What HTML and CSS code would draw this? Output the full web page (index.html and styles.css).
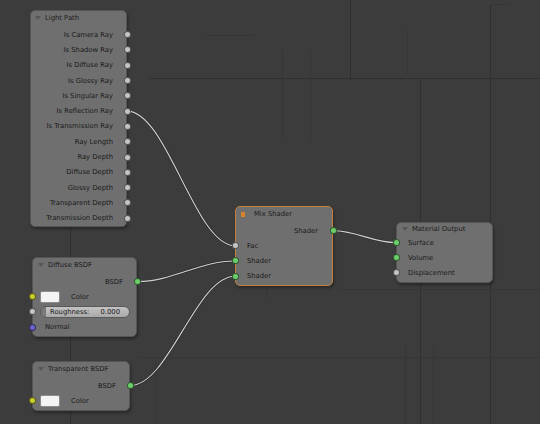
FILE: index.html
```html
<!DOCTYPE html>
<html>
<head>
<meta charset="utf-8">
<link rel="stylesheet" href="styles.css">
</head>
<body>
<div class="editor">
  <svg class="canvas" width="540" height="424" viewBox="0 0 540 424">
    <g class="grid-dark">
      <line x1="150" y1="78.5" x2="540" y2="78.5"/>
      <line x1="420.5" y1="78" x2="420.5" y2="424"/>
      <line x1="490.5" y1="4" x2="490.5" y2="424"/>
      <line x1="350.5" y1="0" x2="350.5" y2="80"/>
      <line x1="70.5" y1="226" x2="70.5" y2="424"/>
    </g>
    <g class="grid-faint">
      <line x1="205" y1="35.5" x2="255" y2="35.5"/>
      <line x1="282.5" y1="50" x2="282.5" y2="140"/>
      <line x1="310.5" y1="50" x2="310.5" y2="140"/>
      <line x1="407.5" y1="30" x2="407.5" y2="75"/>
      <line x1="490" y1="4.5" x2="510" y2="4.5"/>
      <line x1="340" y1="289.5" x2="540" y2="289.5"/>
      <line x1="140" y1="357.5" x2="540" y2="357.5"/>
      <line x1="266.5" y1="287" x2="266.5" y2="300"/>
      <line x1="405.5" y1="345" x2="405.5" y2="424"/>
      <line x1="433.5" y1="345" x2="433.5" y2="424"/>
      <line x1="155.5" y1="360" x2="155.5" y2="424"/>
    </g>
    <g class="wire-shadow">
      <path d="M127 111.15 C167 111.15 195 245.8 235 245.8"/>
      <path d="M137 281.6 C173 281.6 199 261 235 261"/>
      <path d="M130 385.6 C169 385.6 196 276.2 235 276.2"/>
      <path d="M333 230.6 C356 230.6 373 242.6 396 242.6"/>
    </g>
    <g class="wire">
      <path d="M127 111.15 C167 111.15 195 245.8 235 245.8"/>
      <path d="M137 281.6 C173 281.6 199 261 235 261"/>
      <path d="M130 385.6 C169 385.6 196 276.2 235 276.2"/>
      <path d="M333 230.6 C356 230.6 373 242.6 396 242.6"/>
    </g>
  </svg>

  <div class="node n-light">
    <div class="head"><span class="arrow"></span><span class="title">Light Path</span></div>
    <div class="body">
      <div class="row out"><span>Is Camera Ray</span><i class="sock gray"></i></div>
      <div class="row out"><span>Is Shadow Ray</span><i class="sock gray"></i></div>
      <div class="row out"><span>Is Diffuse Ray</span><i class="sock gray"></i></div>
      <div class="row out"><span>Is Glossy Ray</span><i class="sock gray"></i></div>
      <div class="row out"><span>Is Singular Ray</span><i class="sock gray"></i></div>
      <div class="row out"><span>Is Reflection Ray</span><i class="sock gray"></i></div>
      <div class="row out"><span>Is Transmission Ray</span><i class="sock gray"></i></div>
      <div class="row out"><span>Ray Length</span><i class="sock gray"></i></div>
      <div class="row out"><span>Ray Depth</span><i class="sock gray"></i></div>
      <div class="row out"><span>Diffuse Depth</span><i class="sock gray"></i></div>
      <div class="row out"><span>Glossy Depth</span><i class="sock gray"></i></div>
      <div class="row out"><span>Transparent Depth</span><i class="sock gray"></i></div>
      <div class="row out"><span>Transmission Depth</span><i class="sock gray"></i></div>
    </div>
  </div>

  <div class="node n-diffuse">
    <div class="head head-wide"><span class="arrow"></span><span class="title">Diffuse BSDF</span></div>
    <div class="body">
      <div class="row out"><span>BSDF</span><i class="sock green"></i></div>
      <div class="row in color-row"><i class="sock yellow"></i><span class="swatch"></span><span class="color-label">Color</span></div>
      <div class="row in field-row"><i class="sock gray"></i>
        <div class="field"><span>Roughness:</span><span>0.000</span></div>
      </div>
      <div class="row in"><i class="sock purple"></i><span>Normal</span></div>
    </div>
  </div>

  <div class="node n-transparent">
    <div class="head head-wide"><span class="arrow"></span><span class="title">Transparent BSDF</span></div>
    <div class="body">
      <div class="row out"><span>BSDF</span><i class="sock green"></i></div>
      <div class="row in color-row"><i class="sock yellow"></i><span class="swatch"></span><span class="color-label">Color</span></div>
    </div>
  </div>

  <div class="node n-mix selected">
    <div class="head"><span class="dot"></span><span class="title">Mix Shader</span></div>
    <div class="body">
      <div class="row out out-mix"><span>Shader</span><i class="sock green"></i></div>
      <div class="row in"><i class="sock gray"></i><span>Fac</span></div>
      <div class="row in"><i class="sock green"></i><span>Shader</span></div>
      <div class="row in"><i class="sock green"></i><span>Shader</span></div>
    </div>
  </div>

  <div class="node n-output">
    <div class="head head-wide head-short"><span class="arrow"></span><span class="title">Material Output</span></div>
    <div class="body body-tight">
      <div class="row in in-wide"><i class="sock green"></i><span>Surface</span></div>
      <div class="row in in-wide"><i class="sock green"></i><span>Volume</span></div>
      <div class="row in in-wide"><i class="sock gray"></i><span>Displacement</span></div>
    </div>
  </div>
</div>
</body>
</html>
```

FILE: styles.css
```css
html, body {
  margin: 0;
  padding: 0;
  background: #3b3b3b;
}

.editor {
  position: relative;
  width: 540px;
  height: 424px;
  overflow: hidden;
  background: #3c3c3c;
  font-family: "DejaVu Sans", "Liberation Sans", sans-serif;
  font-size: 6.8px;
  color: #1a1a1a;
}

.canvas {
  position: absolute;
  left: 0;
  top: 0;
}

.grid-dark line {
  stroke: #303030;
  stroke-width: 1;
}

.grid-faint line {
  stroke: #363636;
  stroke-width: 1;
}

.wire-shadow path {
  fill: none;
  stroke: rgba(20, 20, 20, 0.45);
  stroke-width: 2.4;
}

.wire path {
  fill: none;
  stroke: #d2d2d2;
  stroke-width: 1.1;
}

/* nodes placed on the free canvas */
.node {
  position: absolute;
  box-sizing: border-box;
  background: #6f6f6f;
  border: 1px solid #555555;
  border-radius: 5px;
  box-shadow: 1px 2px 3px rgba(0, 0, 0, 0.35);
}

.n-light { left: 30px; top: 10px; width: 97px; }
.n-diffuse { left: 32px; top: 257px; width: 105px; }
.n-transparent { left: 32px; top: 361px; width: 98px; }
.n-mix { left: 235px; top: 206px; width: 98px; }
.n-output { left: 396px; top: 222px; width: 97px; }

.node.selected {
  border-color: #c3813e;
}

.head {
  height: 14px;
  display: flex;
  align-items: center;
  padding-left: 4px;
  gap: 4px;
  white-space: nowrap;
}

.head-wide { padding-left: 5px; }
.head-short { height: 12px; }

.arrow {
  width: 0;
  height: 0;
  border-left: 3px solid transparent;
  border-right: 3px solid transparent;
  border-top: 4px solid #575757;
}

.dot {
  width: 4px;
  height: 5px;
  margin-left: 1px;
  margin-right: 5px;
  background: #d9822b;
}

.title {
  color: #1c1c1c;
}

.body {
  padding: 2px 0 1.5px;
}

.body-tight { padding-top: 0; }

.n-light .body { padding-bottom: 0; }
.n-light .row { height: 15.3px; }

.row {
  position: relative;
  height: 15.2px;
  display: flex;
  align-items: center;
  white-space: nowrap;
}

.row.out {
  justify-content: flex-end;
  padding-right: 13px;
}

.row.out-mix { padding-right: 14px; }

.row.in {
  padding-left: 11px;
}

.row.in-wide { padding-left: 11px; }

.n-diffuse .row.in,
.n-transparent .row.in { padding-left: 12px; }

.row.color-row,
.row.field-row {
  padding-left: 7px !important;
}

.sock {
  position: absolute;
  top: 50%;
  width: 7px;
  height: 7px;
  margin-top: -3.5px;
  box-sizing: border-box;
  border-radius: 50%;
  border: 0.8px solid rgba(0, 0, 0, 0.55);
}

.out .sock { right: -4.5px; }
.in .sock { left: -4.5px; }

.sock.gray { background: #c4c4c4; }
.sock.green { background: #6ccf6c; }
.sock.yellow { background: #c9cd2e; }
.sock.purple { background: #6a62cc; }

.swatch {
  width: 20px;
  height: 12px;
  box-sizing: border-box;
  background: #f4f4f4;
  border: 1px solid #8c8c8c;
  border-radius: 2px;
}

.color-label {
  margin-left: 11px;
}

.field {
  width: 90px;
  height: 12px;
  box-sizing: border-box;
  display: flex;
  align-items: center;
  justify-content: space-between;
  padding: 0 9px;
  border: 1px solid #5a5a5a;
  border-radius: 6px;
  background: linear-gradient(to right, #7a7a7a 0, #7a7a7a 5px, transparent 5px),
              linear-gradient(#c3c3c3, #a9a9a9);
  color: #161616;
}
```
